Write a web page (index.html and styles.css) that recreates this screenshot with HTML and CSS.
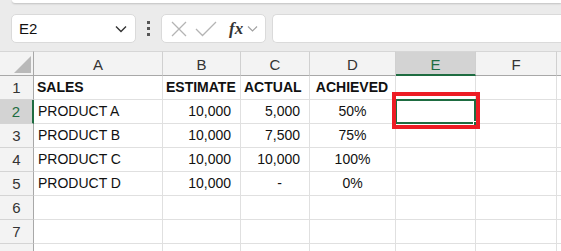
FILE: index.html
```html
<!DOCTYPE html>
<html lang="en">
<head>
  <meta charset="UTF-8">
  <title>Sales</title>
  <link rel="stylesheet" href="styles.css">
</head>
<body>

<div class="ribbon"></div>

<div class="fbar">
  <div class="namebox">
    <span>E2</span>
    <svg class="chev" width="12" height="8" viewBox="0 0 12 8"><path d="M1 1.5 L6 6.5 L11 1.5" fill="none" stroke="#333" stroke-width="1.4"/></svg>
  </div>
  <div class="dots"><i></i><i></i><i></i></div>
  <div class="fbtns">
    <svg width="18" height="18" viewBox="0 0 18 18"><path d="M2 2 L16 16 M16 2 L2 16" stroke="#b4b4b4" stroke-width="1.3"/></svg>
    <svg width="22" height="18" viewBox="0 0 22 18"><path d="M1 9 L7.5 15.5 L21 2" fill="none" stroke="#b4b4b4" stroke-width="1.3"/></svg>
    <span class="fx">fx</span>
    <svg width="11" height="7" viewBox="0 0 11 7"><path d="M1 1.5 L5.5 6 L10 1.5" fill="none" stroke="#a0a0a0" stroke-width="1.2"/></svg>
  </div>
  <div class="finput"></div>
</div>

<div class="sheet">
  <div class="grid">
    <div class="corner"><span class="tri"></span></div>
    <div class="ch">A</div>
    <div class="ch">B</div>
    <div class="ch">C</div>
    <div class="ch">D</div>
    <div class="ch sel">E</div>
    <div class="ch">F</div>
    <div class="ch end"></div>

    <div class="rh">1</div>
    <div class="c b">SALES</div>
    <div class="c b">ESTIMATE</div>
    <div class="c b">ACTUAL</div>
    <div class="c b mid">ACHIEVED</div>
    <div class="c"></div>
    <div class="c"></div>
    <div class="c end"></div>

    <div class="rh sel">2</div>
    <div class="c">PRODUCT A</div>
    <div class="c num">10,000</div>
    <div class="c num">5,000</div>
    <div class="c mid">50%</div>
    <div class="c active"><span class="handle"></span></div>
    <div class="c"></div>
    <div class="c end"></div>

    <div class="rh">3</div>
    <div class="c">PRODUCT B</div>
    <div class="c num">10,000</div>
    <div class="c num">7,500</div>
    <div class="c mid">75%</div>
    <div class="c"></div>
    <div class="c"></div>
    <div class="c end"></div>

    <div class="rh">4</div>
    <div class="c">PRODUCT C</div>
    <div class="c num">10,000</div>
    <div class="c num">10,000</div>
    <div class="c mid">100%</div>
    <div class="c"></div>
    <div class="c"></div>
    <div class="c end"></div>

    <div class="rh">5</div>
    <div class="c">PRODUCT D</div>
    <div class="c num">10,000</div>
    <div class="c num dash">-</div>
    <div class="c mid">0%</div>
    <div class="c"></div>
    <div class="c"></div>
    <div class="c end"></div>

    <div class="rh">6</div>
    <div class="c"></div><div class="c"></div><div class="c"></div><div class="c"></div><div class="c"></div><div class="c"></div><div class="c end"></div>

    <div class="rh">7</div>
    <div class="c"></div><div class="c"></div><div class="c"></div><div class="c"></div><div class="c"></div><div class="c"></div><div class="c end"></div>

    <div class="rh">8</div>
    <div class="c"></div><div class="c"></div><div class="c"></div><div class="c"></div><div class="c"></div><div class="c"></div><div class="c end"></div>
  </div>

  <!-- annotation box round E2 -->
  <div class="mark"></div>
</div>

</body>
</html>
```

FILE: styles.css
```css
* {
  box-sizing: border-box;
}

body {
  margin: 0;
  background: #ebebeb;
  font-family: "Liberation Sans", Arial, sans-serif;
  color: #111;
  overflow: hidden;
}

.ribbon {
  height: 3px;
  margin-left: 12px;
  background: #fff;
  border-bottom-left-radius: 6px;
  box-shadow: 0 1px 2px rgba(0, 0, 0, 0.18);
}

.fbar {
  display: flex;
  align-items: center;
  height: 29px;
  margin-top: 11px;
  padding-left: 11px;
}

.namebox {
  display: flex;
  align-items: center;
  justify-content: space-between;
  width: 125px;
  height: 29px;
  padding: 0 8px 0 7px;
  background: #fff;
  border: 1px solid #dadada;
  border-radius: 5px;
  font-size: 15px;
}

.dots {
  display: flex;
  flex-direction: column;
  gap: 3px;
  margin: 0 11px 0 11px;
}

.dots i {
  display: block;
  width: 3px;
  height: 3px;
  background: #555;
}

.fbtns {
  display: flex;
  align-items: center;
  width: 105px;
  height: 29px;
  padding-left: 8px;
  gap: 7px;
  background: #fff;
  border: 1px solid #dadada;
  border-radius: 5px;
}

.fx {
  font-family: "Liberation Serif", "Times New Roman", serif;
  font-style: italic;
  font-weight: bold;
  font-size: 17px;
  color: #333;
  margin-left: 5px;
  margin-right: -3px;
}

.finput {
  flex: 1;
  height: 29px;
  margin-left: 6px;
  background: #fff;
  border: 1px solid #dadada;
  border-right: none;
  border-radius: 5px 0 0 5px;
}

.sheet {
  position: relative;
  margin-top: 8px;
  background: #fff;
}

.grid {
  display: grid;
  grid-template-columns: 34px 129px 78px 69px 86px 80px 81px 1fr;
  grid-template-rows: 25px repeat(8, 24px);
  font-size: 14px;
}

.corner {
  position: relative;
  background: #f3f3f3;
  border-top: 1px solid #d6d6d6;
  border-right: 1px solid #a8a8a8;
  border-bottom: 1px solid #a8a8a8;
}

.tri {
  position: absolute;
  right: 2px;
  bottom: 2px;
  width: 0;
  height: 0;
  border-left: 17px solid transparent;
  border-bottom: 17px solid #b9b9b9;
}

.ch {
  display: flex;
  align-items: center;
  justify-content: center;
  background: #f3f3f3;
  border-top: 1px solid #d6d6d6;
  border-right: 1px solid #d0d0d0;
  border-bottom: 1px solid #a8a8a8;
  font-size: 15px;
  color: #333;
  padding-top: 1px;
}

.ch.sel {
  background: #d3d3d3;
  border-bottom: 2px solid #1e6c41;
  color: #1e6c41;
  padding-top: 2px;
}

.ch.end {
  border-right: none;
}

.rh {
  display: flex;
  align-items: center;
  justify-content: center;
  background: #f3f3f3;
  border-right: 1px solid #a8a8a8;
  border-bottom: 1px solid #d4d4d4;
  font-size: 15px;
  color: #333;
}

.rh.sel {
  background: #d3d3d3;
  border-right: 2px solid #1e6c41;
  color: #1e6c41;
}

.c {
  display: flex;
  align-items: flex-end;
  padding: 0 4px 4px 4px;
  border-right: 1px solid #e0e0e0;
  border-bottom: 1px solid #e0e0e0;
  white-space: nowrap;
}

.c.end {
  border-right: none;
}

.b {
  font-weight: bold;
  padding-left: 3px;
}

.num {
  justify-content: flex-end;
  padding-right: 9px;
}

.dash {
  padding-right: 27px;
}

.mid {
  justify-content: center;
}

.active {
  position: relative;
  border: none;
  box-shadow: inset 0 0 0 2px #1e6c41;
  margin: -1px 0 0 -1px;
}

.handle {
  position: absolute;
  right: -2px;
  bottom: -2px;
  width: 5px;
  height: 5px;
  background: #1e6c41;
  border: 1px solid #fff;
}

.mark {
  position: absolute;
  left: 392px;
  top: 41px;
  width: 88px;
  height: 37px;
  border: 4px solid #ed1c24;
}
```
